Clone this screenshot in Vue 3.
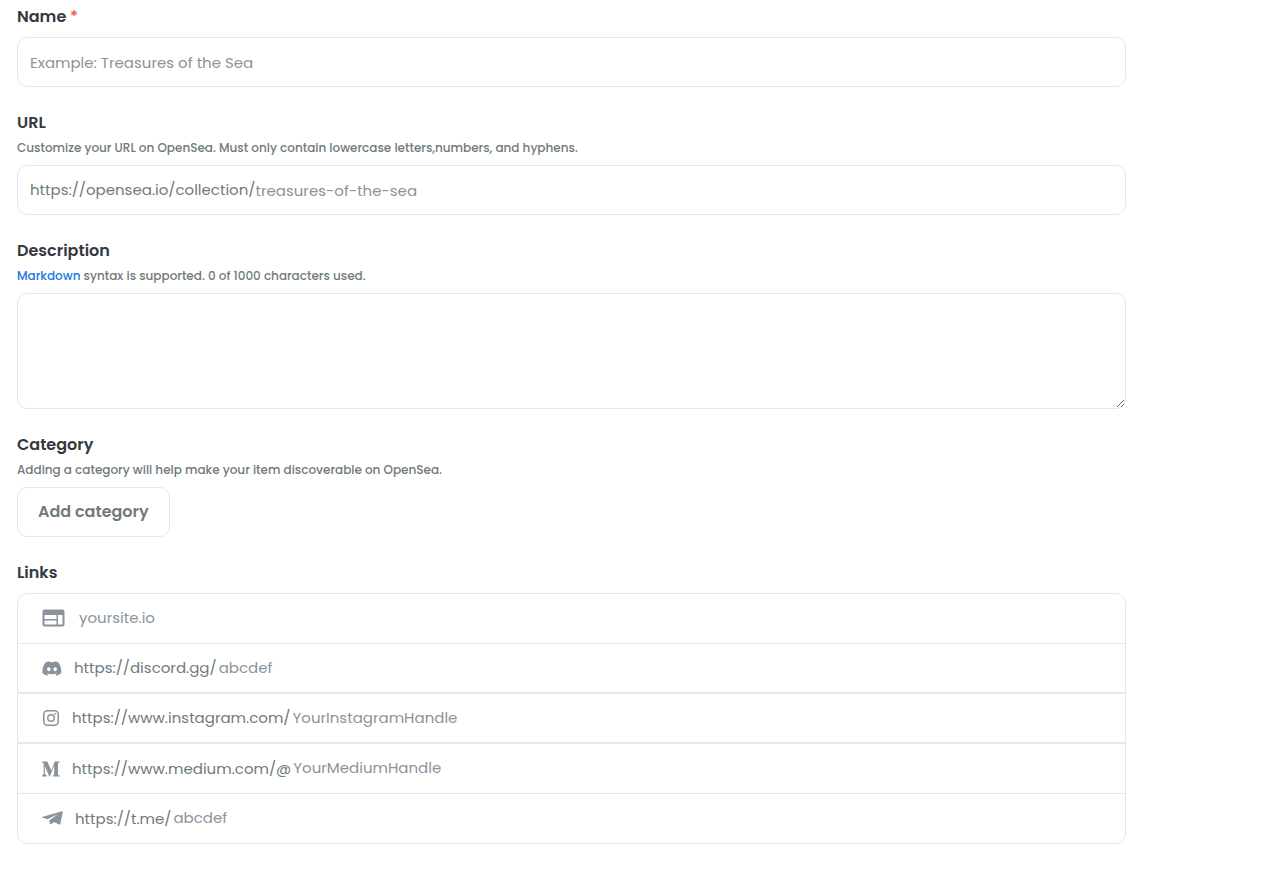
<template>
  <form class="collection-form" @submit.prevent>
    <div class="field">
      <label class="title" for="name">Name <span class="required">*</span></label>
      <div class="box">
        <input id="name" v-model="name" type="text" placeholder="Example: Treasures of the Sea">
      </div>
    </div>

    <div class="field">
      <label class="title" for="slug">URL</label>
      <p class="help">Customize your URL on OpenSea. Must only contain lowercase letters,numbers, and hyphens.</p>
      <div class="box">
        <label class="prefix" for="slug">https://opensea.io/collection/</label>
        <input id="slug" v-model="slug" type="text" placeholder="treasures-of-the-sea">
      </div>
    </div>

    <div class="field">
      <label class="title" for="description">Description</label>
      <p class="help"><a href="#">Markdown</a> syntax is supported. {{ description.length }} of 1000 characters used.</p>
      <textarea id="description" v-model="description" maxlength="1000"></textarea>
    </div>

    <div class="field">
      <h4 class="title">Category</h4>
      <p class="help">Adding a category will help make your item discoverable on OpenSea.</p>
      <button type="button" class="add-category">Add category</button>
    </div>

    <div class="field">
      <h4 id="links-title" class="title">Links</h4>
      <div class="links">
        <div v-for="link in links" :key="link.id" class="link-row" :class="link.id">
          <svg :width="link.width" :height="link.height" :viewBox="link.viewBox" aria-hidden="true">
            <path :d="link.path" fill-rule="evenodd" />
          </svg>
          <label v-if="link.prefix" class="prefix" :for="link.id">{{ link.prefix }}</label>
          <input
            :id="link.id"
            v-model="link.value"
            type="text"
            :placeholder="link.placeholder"
            :aria-labelledby="link.prefix ? null : 'links-title'"
          >
        </div>
      </div>
    </div>
  </form>
</template>

<script setup>
import { ref } from 'vue'

const name = ref('')
const slug = ref('')
const description = ref('')

const links = ref([
  {
    id: 'website',
    prefix: '',
    placeholder: 'yoursite.io',
    value: '',
    width: 23,
    height: 19,
    viewBox: '0 0 23 19',
    path: 'M2.5 .5H20.5Q22.5 .5 22.5 2.5V15.5Q22.5 17.5 20.5 17.5H2.5Q.5 17.5 .5 15.5V2.5Q.5 .5 2.5 .5ZM2.5 6V10H14.5V6ZM2.5 11.5V15.5H14.5V11.5ZM16 6V15.5H20.5V6Z'
  },
  {
    id: 'discord',
    prefix: 'https://discord.gg/',
    placeholder: 'abcdef',
    value: '',
    width: 20,
    height: 15,
    viewBox: '0 2.6 24 18.8',
    path: 'M20.317 4.37a19.79 19.79 0 0 0-4.885-1.515.074.074 0 0 0-.079.037c-.21.375-.444.865-.608 1.25a18.27 18.27 0 0 0-5.487 0 12.64 12.64 0 0 0-.617-1.25.077.077 0 0 0-.079-.037A19.736 19.736 0 0 0 3.677 4.37C.533 9.046-.32 13.58.099 18.058c2.053 1.508 4.041 2.423 5.993 3.03.462-.63.874-1.295 1.226-1.994a13.1 13.1 0 0 1-1.872-.892l.372-.292c3.928 1.793 8.18 1.793 12.061 0l.374.292c-.6.35-1.22.645-1.873.892.36.698.772 1.362 1.225 1.993 1.961-.607 3.95-1.522 6.002-3.029.5-5.177-.838-9.674-3.29-13.688ZM8.02 15.33c-1.183 0-2.157-1.085-2.157-2.419s.955-2.419 2.157-2.419c1.21 0 2.176 1.096 2.157 2.42 0 1.333-.956 2.418-2.157 2.418Zm7.975 0c-1.183 0-2.157-1.085-2.157-2.419s.955-2.419 2.157-2.419c1.21 0 2.176 1.096 2.157 2.42 0 1.333-.946 2.418-2.157 2.418Z'
  },
  {
    id: 'instagram',
    prefix: 'https://www.instagram.com/',
    placeholder: 'YourInstagramHandle',
    value: '',
    width: 18,
    height: 18,
    viewBox: '0 0 18 18',
    path: 'M5.5 1H12.5A4.5 4.5 0 0 1 17 5.5V12.5A4.5 4.5 0 0 1 12.5 17H5.5A4.5 4.5 0 0 1 1 12.5V5.5A4.5 4.5 0 0 1 5.5 1ZM5.5 2.5A3 3 0 0 0 2.5 5.5V12.5A3 3 0 0 0 5.5 15.5H12.5A3 3 0 0 0 15.5 12.5V5.5A3 3 0 0 0 12.5 2.5ZM9 5A4 4 0 1 1 9 13A4 4 0 1 1 9 5ZM9 6.5A2.5 2.5 0 1 0 9 11.5A2.5 2.5 0 1 0 9 6.5ZM13.2 3.9A.9 .9 0 1 1 13.2 5.7A.9 .9 0 1 1 13.2 3.9Z'
  },
  {
    id: 'medium',
    prefix: 'https://www.medium.com/@',
    placeholder: 'YourMediumHandle',
    value: '',
    width: 18,
    height: 16,
    viewBox: '0 0 18 16',
    path: 'M0 .5H5.3L9.3 9.4L12.8 .5H17.7V1.2L16 2.2V13.7L17.8 14.8V15.5H10.6V14.8L12.2 13.7V4.6L7.9 15.5H7.3L2.9 5V13L4.9 14.8V15.5H0V14.8L1.7 13V2.6L0 1.2Z'
  },
  {
    id: 'telegram',
    prefix: 'https://t.me/',
    placeholder: 'abcdef',
    value: '',
    width: 21,
    height: 15,
    viewBox: '0 0 21 15',
    path: 'M0 6L20.2 .3Q21.1 .2 20.8 1L18.3 13Q18 14 17.1 13.5L12 11L9.4 12.9Q8.3 13.7 8 12.5L7.2 9.4L16.3 3L5.4 8.2L.3 6.6Q-.3 6.3 0 6Z'
  }
])
</script>

<style>
body {
  margin: 0;
  background: #fff;
}
</style>

<style scoped>
.collection-form {
  display: flex;
  flex-direction: column;
  gap: 24px;
  padding: 5px 137px 24px 17px;
  font-family: Poppins, Inter, sans-serif;
  font-size: 16px;
  color: #707a7c;
}

.field {
  display: flex;
  flex-direction: column;
  align-items: stretch;
}

.title {
  margin: 0 0 8px;
  font-size: 16px;
  font-weight: 600;
  line-height: 24px;
  color: #353840;
}

.required {
  font-weight: 500;
  color: #eb5757;
}

.help {
  margin: -4px 0 8px;
  font-size: 12px;
  font-weight: 500;
  line-height: 18px;
}

.help a {
  color: #2076e5;
  text-decoration: none;
}

.box,
textarea,
.add-category,
.links {
  box-sizing: border-box;
  border: 1px solid #e5e8eb;
  border-radius: 10px;
  background: #fff;
}

.box {
  display: flex;
  align-items: center;
  min-height: 50px;
  padding: 0 12px;
}

input {
  flex: 1;
  min-width: 0;
  height: 40px;
  padding: 0;
  border: 0;
  outline: 0;
  background: transparent;
  font-family: inherit;
  font-size: 15px;
  color: #353840;
}

input::placeholder {
  color: #8a939b;
  opacity: 1;
}

.prefix {
  font-size: 15px;
  line-height: 24px;
}

textarea {
  display: block;
  width: 100%;
  height: 116px;
  padding: 12px;
  resize: vertical;
  font: inherit;
  color: #353840;
}

.add-category {
  align-self: flex-start;
  height: 50px;
  padding: 0 20px 2px;
  font-family: inherit;
  font-size: 16px;
  font-weight: 600;
  color: #707a7c;
  cursor: pointer;
}

.link-row {
  box-sizing: border-box;
  display: flex;
  align-items: center;
  min-height: 50px;
  padding: 0 24px;
  border-bottom: 1px solid #e5e8eb;
}

.link-row.discord,
.link-row.instagram {
  border-bottom-width: 2px;
}

.link-row:last-child {
  min-height: 49px;
  border-bottom: 0;
}

.link-row svg {
  flex: none;
  margin-right: 12px;
  fill: #8a939b;
}

.link-row input {
  height: 38px;
  padding: 0 0 2px 2px;
}
</style>
